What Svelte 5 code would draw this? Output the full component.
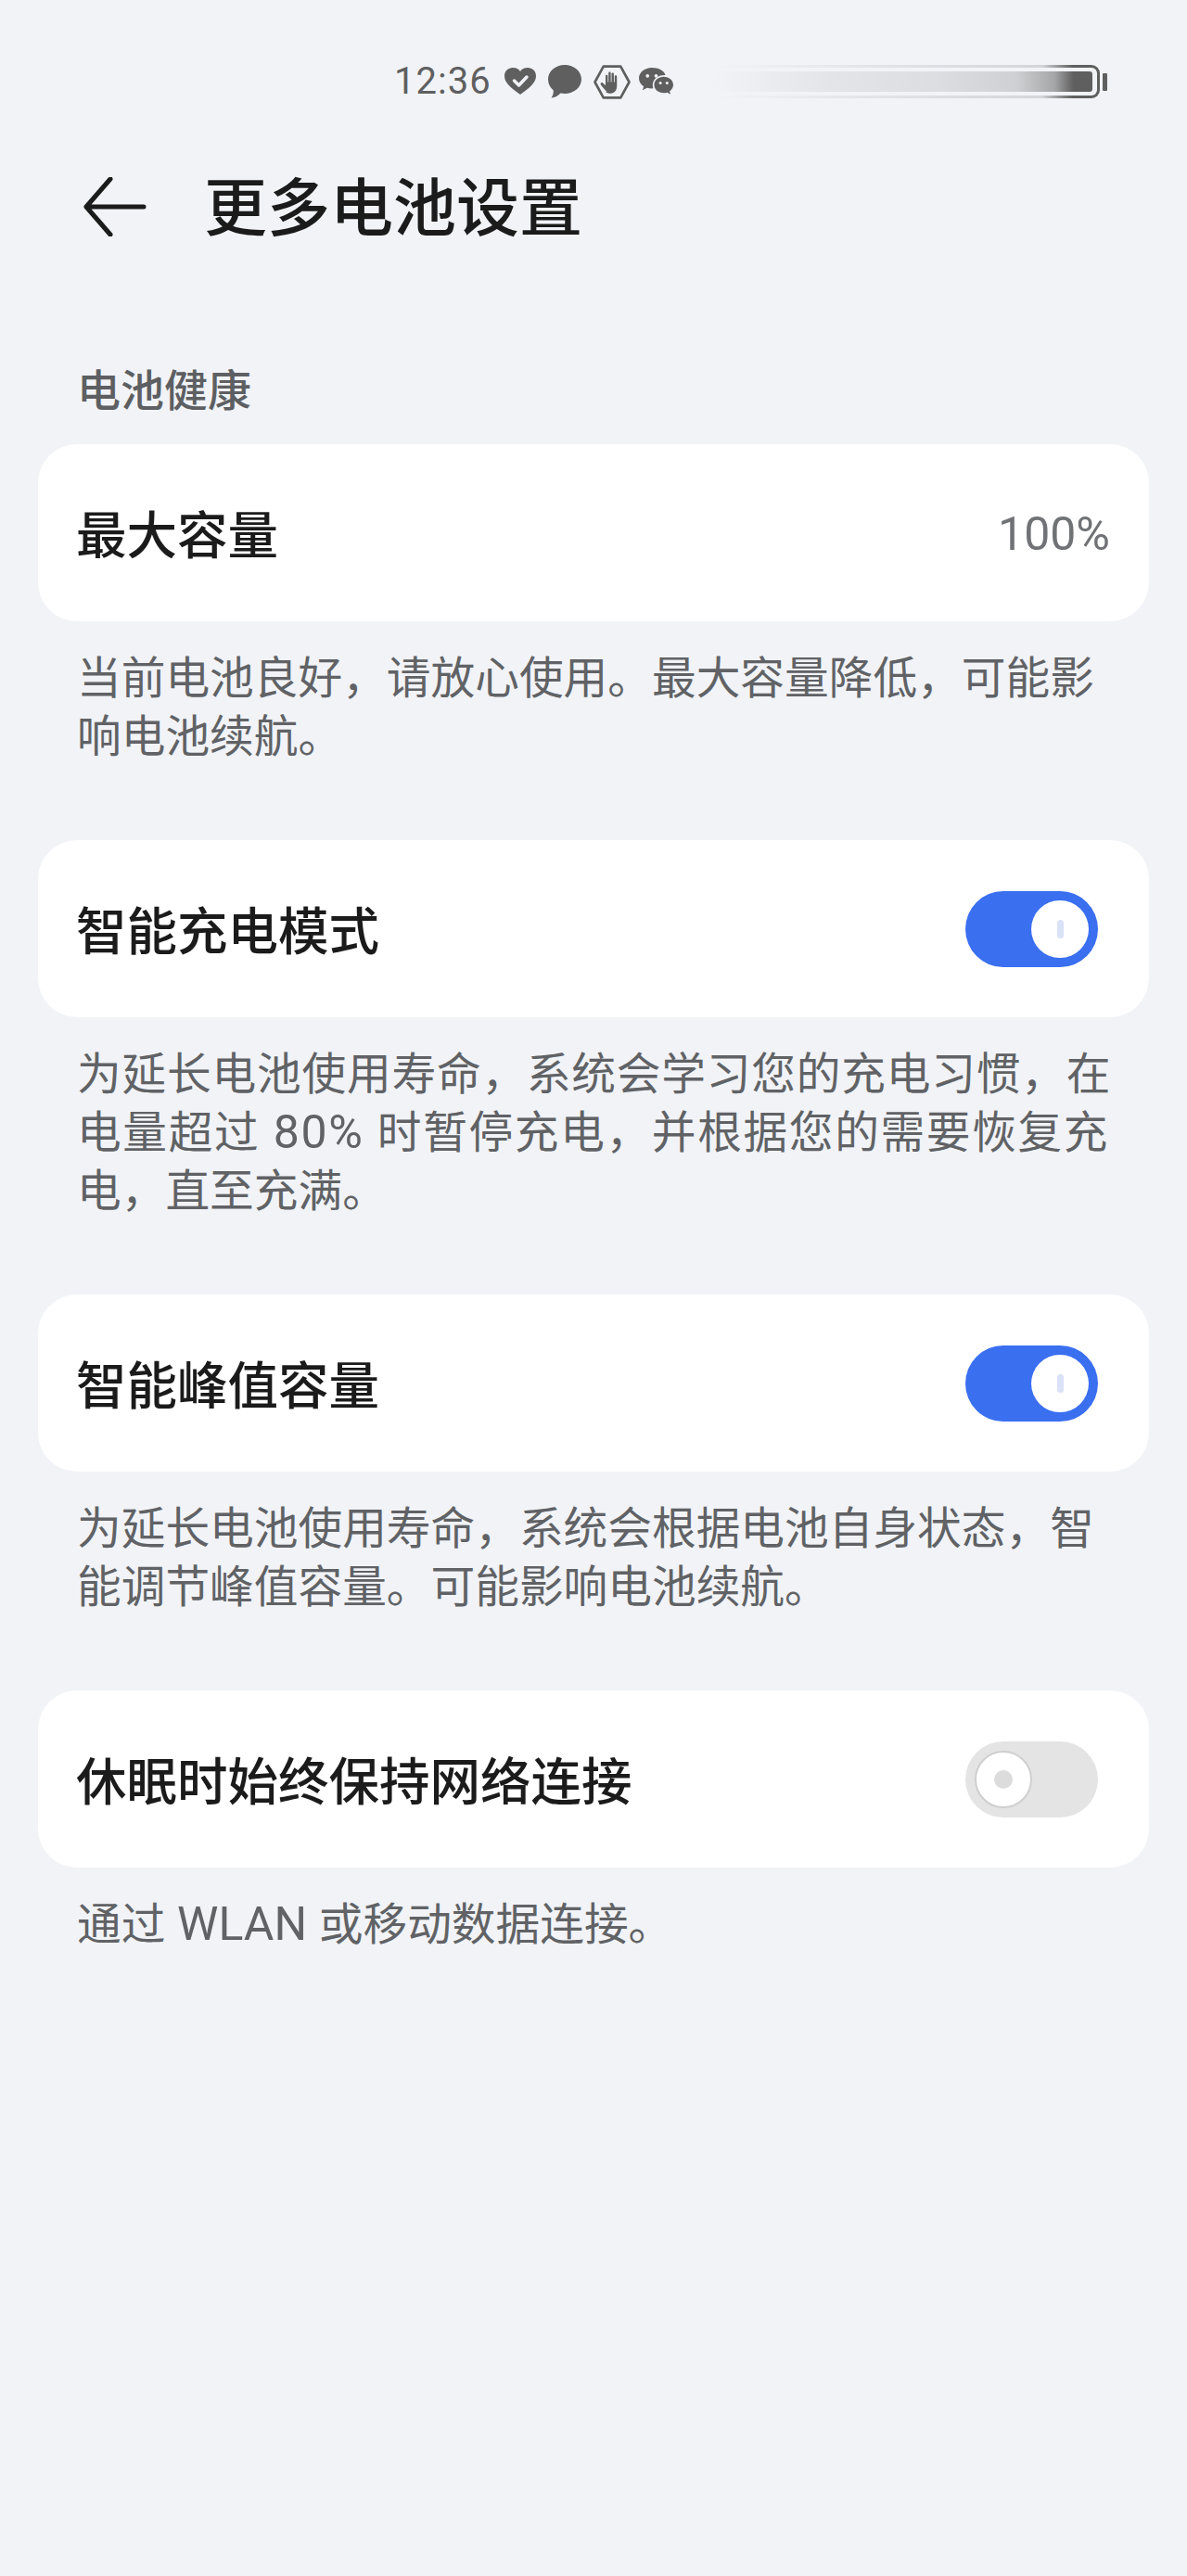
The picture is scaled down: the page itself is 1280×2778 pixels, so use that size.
<script>
  const split = (t) => t.split(/([A-Za-z0-9%]+)/);
  const sections = [
    { title: '最大容量', value: '100%', lines: [{ t: '当前电池良好，请放心使用。最大容量降低，可能影', s: 0 }, { t: '响电池续航。', s: 0 }] },
    { title: '智能充电模式', on: true, lines: [{ t: '为延长电池使用寿命，系统会学习您的充电习惯，在', s: 0.8 }, { t: '电量超过 80% 时暂停充电，并根据您的需要恢复充', s: 1.65 }, { t: '电，直至充满。', s: 0 }] },
    { title: '智能峰值容量', on: true, lines: [{ t: '为延长电池使用寿命，系统会根据电池自身状态，智', s: 0 }, { t: '能调节峰值容量。可能影响电池续航。', s: 0 }] },
    { title: '休眠时始终保持网络连接', on: false, lines: [{ t: '通过 WLAN 或移动数据连接。', s: 0 }] }
  ];
</script>

<div class="page">
  <div class="status">
    <span class="time">12:36</span>
    <svg class="i heart" viewBox="0 0 34 30"><path d="M17 29C9 23 0 17 0 9 0 3.500 4 0 9 0c3.500 0 6.500 1.500 8 4 1.500-2.500 4.500-4 8-4 5 0 9 3.500 9 9 0 8-9 14-17 20z" fill="#5f5f5f"/><path d="M10.500 14l5 5 8.500-9" fill="none" stroke="#f1f3f7" stroke-width="3.500" stroke-linecap="round" stroke-linejoin="round"/></svg>
    <svg class="i bubble" viewBox="0 0 36 36"><path d="M18 0c10 0 18 7 18 15.500S28 31 18 31c-1.500 0-3-.2-4.500-.5C11 33 7.500 35.500 3.500 35.500c1.500-2 2.500-5 2.300-8C2.300 24.500 0 20.300 0 15.500 0 7 8 0 18 0z" fill="#5f5f5f"/></svg>
    <svg class="i hex" viewBox="0 0 40 36"><path d="M11 1.500h18L38 18l-9 16.500H11L2 18z" fill="none" stroke="#5f5f5f" stroke-width="2.600" stroke-linejoin="round"/><path d="M14.500 28c-1.800-1.800-4.800-5-6.300-7.200-1-1.400.8-2.900 2.100-1.900l2.900 2.400V11.500c0-1.500 2.300-1.500 2.300 0V18h.8V8.500c0-1.500 2.400-1.500 2.400 0V18h.8V9.500c0-1.500 2.400-1.500 2.400 0V18h.8v-6c0-1.500 2.400-1.500 2.400 0v10c0 4.500-2.300 8-6.500 8-2.500 0-4.300-.7-5.500-2z" fill="#5f5f5f"/></svg>
    <svg class="i wechat" viewBox="0 0 36 30"><path d="M13.500 0C6 0 0 5 0 11c0 3.500 2 6.500 5 8.500L3.800 23.500l4.700-2.500c1.500.4 3.200.7 5 .7.500 0 1 0 1.500-.1-.4-1.200-.6-2.300-.6-3.600 0-5.800 5.500-10.300 12.300-10.300h1C26.800 3.200 20.800 0 13.500 0z" fill="#5f5f5f"/><path d="M26 9.500c-5.500 0-10 3.800-10 8.500s4.500 8.500 10 8.500c1.300 0 2.500-.2 3.600-.6l3.600 2-1-3.200c2.300-1.600 3.800-4 3.800-6.700 0-4.700-4.500-8.500-10-8.500z" fill="#5f5f5f"/><circle cx="9" cy="8.500" r="1.800" fill="#f1f3f7"/><circle cx="18" cy="8.500" r="1.800" fill="#f1f3f7"/><circle cx="22.500" cy="16" r="1.500" fill="#f1f3f7"/><circle cx="29.500" cy="16" r="1.500" fill="#f1f3f7"/></svg>
    <div class="battery">
      <div class="shell"><div class="fill"></div></div>
      <div class="nub"></div>
    </div>
  </div>

  <header class="head">
    <svg class="back" viewBox="0 0 68 64"><path d="M29 2L3 32l26 30M3 32h62" fill="none" stroke="#1b1b1b" stroke-width="5" stroke-linecap="round" stroke-linejoin="round"/></svg>
    <h1>更多电池设置</h1>
  </header>

  <div class="label">电池健康</div>

  {#each sections as s}
    <div class="card">
      <span class="name">{s.title}</span>
      {#if s.value}
        <span class="value">{s.value}</span>
      {:else}
        <div class="toggle" class:on={s.on}><div class="knob"><i></i></div></div>
      {/if}
    </div>
    <div class="desc">
      {#each s.lines as l}
        <div class="line" style:letter-spacing="{l.s}px">{#each split(l.t) as part, i}{#if i % 2}<span class="latin">{part}</span>{:else}{part}{/if}{/each}</div>
      {/each}
    </div>
  {/each}
</div>

<style>
  :global(body) { margin: 0; background: #f1f3f7; }
  .page {
    height: 2778px;
    box-sizing: border-box;
    background: #f1f3f7;
    padding: 0 41px;
    font-family: "Noto Sans CJK SC", "Noto Sans", sans-serif;
    overflow: hidden;
  }
  .status {
    height: 176px;
    display: flex;
    align-items: center;
    box-sizing: border-box;
    padding: 0 0 0 384px;
  }
  .time {
    font-family: Roboto, "Noto Sans", sans-serif;
    font-size: 40px;
    color: #5f5f5f;
    width: 119px;
    letter-spacing: 1px;
    line-height: 1;
  }
  .i { display: block; flex: none; }
  .heart { width: 34px; height: 30px; margin-right: 13px; }
  .bubble { width: 36px; height: 36px; margin-right: 12px; }
  .hex { width: 42px; height: 37px; margin-right: 8px; }
  .wechat { width: 37px; height: 31px; }
  .battery {
    display: flex;
    align-items: center;
    margin-left: 43px;
    gap: 3px;
  }
  .shell {
    width: 417px;
    height: 36px;
    box-sizing: border-box;
    border-radius: 0 9px 9px 0;
    padding: 4px 5px 4px 0;
    border: 3px solid transparent;
    border-left: 0;
    background:
      linear-gradient(#f1f3f7, #f1f3f7) padding-box,
      linear-gradient(90deg, #f1f3f7 0%, #e3e4e7 40%, #d4d5d8 85%, #5f5f5f 93%, #5f5f5f 100%) border-box;
  }
  .fill {
    height: 100%;
    border-radius: 0 3px 3px 0;
    background: linear-gradient(90deg, #f1f3f7 0%, #e4e5e8 30%, #dcdde0 60%, #cfd0d3 80%, #a5a6a8 90%, #5f5f5f 95%);
  }
  .nub { width: 5px; height: 19px; border-radius: 1px; background: #5f5f5f; }
  .head { height: 94px; display: flex; align-items: center; padding-left: 49px; }
  .back { width: 68px; height: 64px; flex: none; }
  h1 {
    margin: 0 0 6px 62px;
    font-size: 68px;
    font-weight: 500;
    color: #1b1b1b;
    line-height: 1;
    white-space: nowrap;
  }
  .label {
    margin: 117px 0 31px 42px;
    height: 61px;
    font-size: 47px;
    font-weight: 500;
    line-height: 61px;
    color: #5d5f62;
  }
  .card {
    height: 191px;
    background: #fff;
    border-radius: 42px;
    display: flex;
    align-items: center;
    justify-content: space-between;
    padding: 0 42px;
    box-sizing: border-box;
    width: 1198px;
  }
  .name { font-size: 54.500px; font-weight: 500; color: #1b1b1b; white-space: nowrap; margin: 0 0 3px -1px; }
  .value { font-family: Roboto, "Noto Sans", sans-serif; font-size: 50px; color: #707275; margin-top: 3px; }
  .desc {
    margin: 26px 0 84px;
    padding: 0 42px;
    font-size: 47.700px;
    line-height: 63px;
    color: #606265;
    white-space: nowrap;
    word-spacing: 2px;
  }
  .line { height: 63px; }
  .latin { font-family: Roboto, "Noto Sans", sans-serif; font-size: 50px; }
  .toggle {
    width: 143px;
    height: 82px;
    border-radius: 41px;
    background: #e4e4e4;
    margin-right: 13px;
    display: flex;
    align-items: center;
    padding: 0 10px;
    box-sizing: border-box;
    flex: none;
  }
  .toggle.on { background: #3a6ff0; justify-content: flex-end; }
  .knob {
    width: 62px;
    height: 62px;
    box-sizing: border-box;
    border-radius: 50%;
    background: #fff;
    border: 2.500px solid #cfcfcf;
    display: flex;
    align-items: center;
    justify-content: center;
  }
  .toggle.on .knob { border: 0; }
  .knob i { display: block; width: 20px; height: 20px; border-radius: 50%; background: #dcdcdc; }
  .toggle.on .knob i { width: 7px; height: 20px; border-radius: 4px; background: #d9e2f7; }
</style>
